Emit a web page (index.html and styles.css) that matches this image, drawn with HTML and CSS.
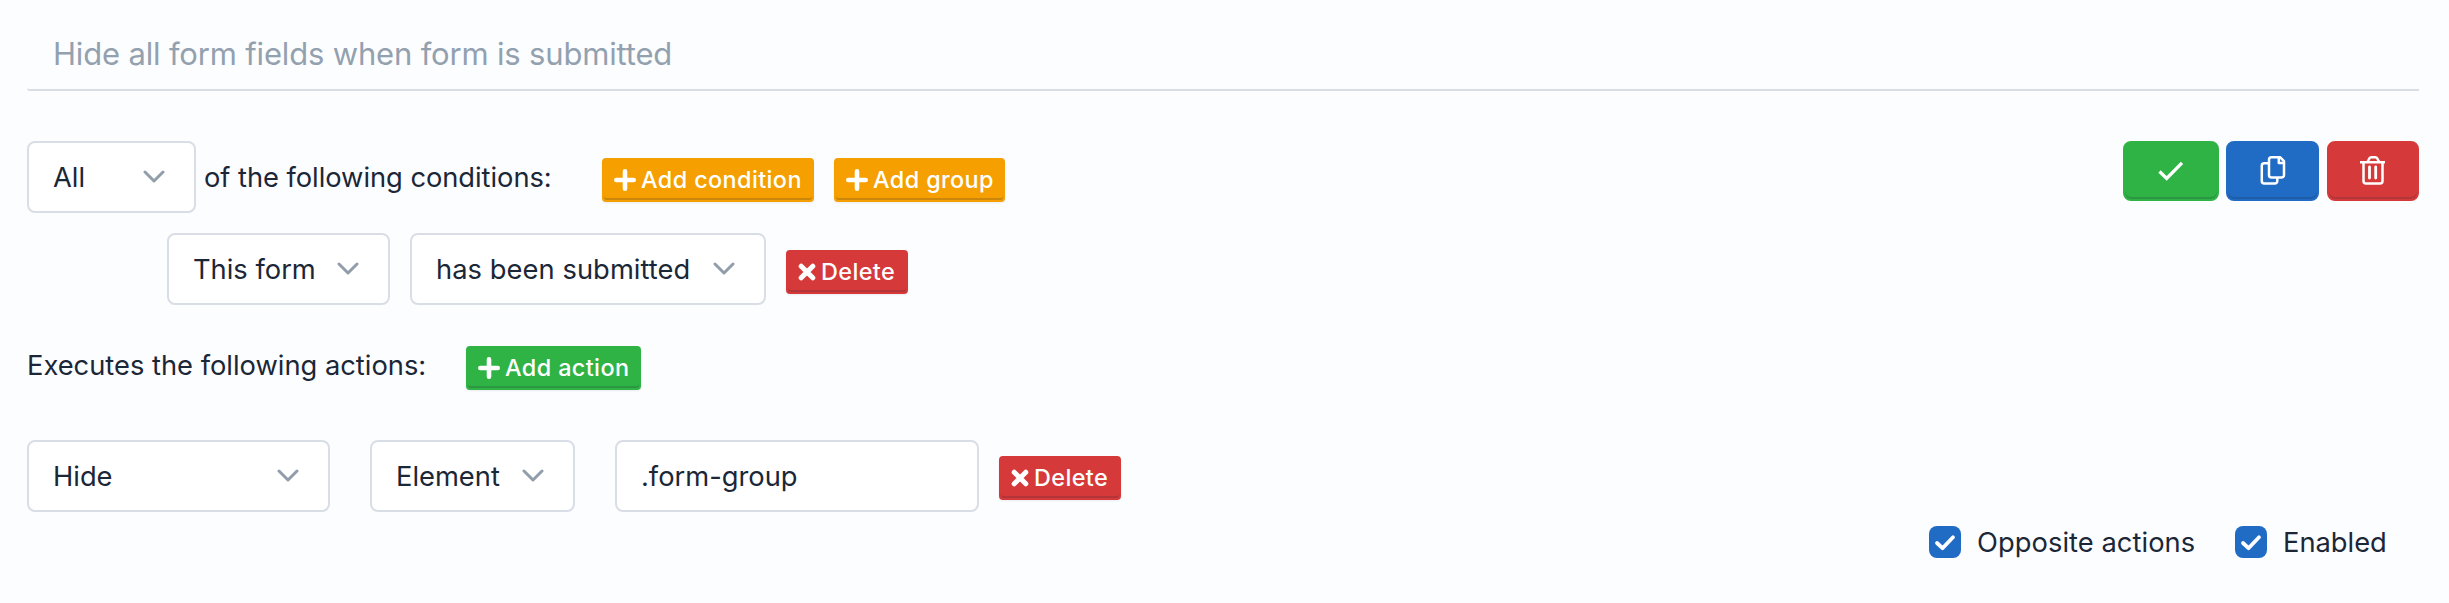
FILE: index.html
```html
<!DOCTYPE html>
<html lang="en">
<head>
<meta charset="utf-8">
<title>Form conditions</title>
<link rel="stylesheet" href="styles.css">
</head>
<body>
<svg width="0" height="0" class="sprite" aria-hidden="true">
  <symbol id="chevron" viewBox="0 0 22 14"><path d="M2 2l9 9 9-9" fill="none" stroke="#929dab" stroke-width="3" stroke-linecap="round" stroke-linejoin="round"/></symbol>
  <symbol id="plus" viewBox="0 0 22 22"><path d="M11 2.3v17.4M2.3 11h17.4" fill="none" stroke="#fff" stroke-width="4.6" stroke-linecap="round"/></symbol>
  <symbol id="cross" viewBox="0 0 18 18"><path d="M3.2 3.2l11.6 11.6M14.8 3.2L3.2 14.8" fill="none" stroke="#fff" stroke-width="5" stroke-linecap="round"/></symbol>
  <symbol id="tick" viewBox="0 0 32 32"><path d="M8 17l5.500 5.200L24 11.300" fill="none" stroke="#fff" stroke-width="3.8" stroke-linecap="round" stroke-linejoin="round"/></symbol>
</svg>
<main class="page">
  <div class="title">Hide all form fields when form is submitted</div>

  <div class="row row-match">
    <div class="select select-all"><span>All</span><svg class="chevron"><use href="#chevron"/></svg></div>
    <span class="label label-match">of the following conditions:</span>
    <button class="btn btn-orange btn-condition"><svg class="plus"><use href="#plus"/></svg>Add condition</button>
    <button class="btn btn-orange btn-group"><svg class="plus"><use href="#plus"/></svg>Add group</button>
    <div class="tools">
      <button class="tool tool-green"><svg width="40" height="40" viewBox="0 0 40 40"><path d="M8.500 20.500l7.200 6.900L31 11.800" fill="none" stroke="#fff" stroke-width="3.300"/></svg></button>
      <button class="tool tool-blue"><svg width="40" height="40" viewBox="0 0 40 40" fill="none" stroke="#fff" stroke-width="2.500" stroke-linejoin="round"><path d="M18.500 6.200h8.500l4 4V24a2.500 2.500 0 0 1-2.500 2.500h-10A2.500 2.500 0 0 1 16 24V8.700a2.500 2.500 0 0 1 2.500-2.500z"/><path d="M25.800 6.500v5.500H31M16 12.200h-4.700a2.500 2.500 0 0 0-2.500 2.500V30a2.500 2.500 0 0 0 2.500 2.500h10.500a2.500 2.500 0 0 0 2.500-2.500v-3"/></svg></button>
      <button class="tool tool-red"><svg width="40" height="40" viewBox="0 0 40 40" fill="none" stroke="#fff" stroke-width="2.500" stroke-linejoin="round"><path d="M7 11.200h25M14.500 11l1.800-3.500q.8-1.300 2-1.300h4q1.300 0 2 1.300L26.200 11M10.500 11.200V30a2.500 2.500 0 0 0 2.500 2.500h14a2.500 2.500 0 0 0 2.500-2.500V11.200"/><path d="M16.500 15.900v11.200M22.700 15.900v11.200" stroke-width="2.800" stroke-linecap="round"/></svg></button>
    </div>
  </div>

  <div class="row row-condition">
    <div class="select select-form"><span>This form</span><svg class="chevron"><use href="#chevron"/></svg></div>
    <div class="select select-state"><span class="state-text">has been submitted</span><svg class="chevron"><use href="#chevron"/></svg></div>
    <button class="btn btn-red"><svg class="cross"><use href="#cross"/></svg>Delete</button>
  </div>

  <div class="row row-execute">
    <span class="label label-execute">Executes the following actions:</span>
    <button class="btn btn-green"><svg class="plus"><use href="#plus"/></svg>Add action</button>
  </div>

  <div class="row row-action">
    <div class="select select-hide"><span>Hide</span><svg class="chevron"><use href="#chevron"/></svg></div>
    <div class="select select-element"><span>Element</span><svg class="chevron"><use href="#chevron"/></svg></div>
    <div class="select field"><span>.form-group</span></div>
    <button class="btn btn-red"><svg class="cross"><use href="#cross"/></svg>Delete</button>
  </div>

  <div class="options">
    <div class="option option-opposite"><svg class="check"><use href="#tick"/></svg><span>Opposite actions</span></div>
    <div class="option option-enabled"><svg class="check"><use href="#tick"/></svg><span>Enabled</span></div>
  </div>
</main>
</body>
</html>
```
FILE: styles.css
```css
* { box-sizing: border-box; }
body { margin: 0; background: #fcfdff; color: #1b2737; font: 27.3px/40px Inter, "Liberation Sans", sans-serif; white-space: nowrap; }
.sprite { display: block; }
.page { padding: 19px 30px 0 27px; height: 603px; }
.title { height: 72px; padding-left: 26px; border-bottom: 2px solid #d9dee6; border-radius: 3px 0 0 3px; font-size: 31px; line-height: 70px; letter-spacing: -.17px; color: #93a1af; }
.row { display: flex; align-items: flex-start; }
.row-match { margin-top: 50px; height: 72px; }
.row-condition { margin-top: 20px; padding-left: 140px; height: 72px; }
.row-execute { margin-top: 41px; height: 44px; }
.row-action { margin-top: 50px; height: 72px; }
.select { flex: none; display: flex; align-items: center; justify-content: space-between; height: 72px; padding: 0 29px 0 24px; border: 2px solid #d9dee6; border-radius: 8px; background: #fff; }
.select span, .option span { padding-top: 2px; }
.select-all { width: 169px; }
.select-form { width: 223px; margin-right: 20px; }
.select-state { width: 356px; margin-right: 20px; }
.state-text { letter-spacing: .06px; }
.select-hide { width: 303px; margin-right: 40px; }
.select-element { width: 205px; margin-right: 40px; }
.field { width: 364px; margin-right: 20px; }
.chevron { flex: none; width: 22px; height: 14px; }
.label { flex: none; }
.label-match { width: 398px; margin-left: 8px; line-height: 74px; letter-spacing: -.04px; }
.label-execute { width: 439px; line-height: 40px; }
.btn { flex: none; display: flex; align-items: center; height: 44px; margin: 0; padding: 0 0 0 10px; border: 2px solid; border-radius: 4px; color: #fff; font: 500 23.4px/40px Inter, "Liberation Sans", sans-serif; letter-spacing: .4px; box-shadow: inset 0 -2px rgba(30, 41, 59, .2), 0 1px 2px rgba(30, 41, 59, .08); }
.row-match .btn { margin-top: 17px; }
.row-condition .btn { margin-top: 17px; }
.row-action .btn { margin-top: 16px; }
.btn-orange { background: #f59f00; border-color: #f59f00; }
.btn-green { width: 175px; background: #2fb344; border-color: #2fb344; }
.btn-red { width: 122px; background: #d63939; border-color: #d63939; }
.btn-condition { width: 212px; margin-right: 20px; }
.btn-group { width: 171px; }
.plus { width: 22px; height: 22px; margin-right: 5px; }
.cross { width: 18px; height: 18px; margin-right: 5px; }
.tools { display: flex; margin-left: auto; }
.tool { display: flex; align-items: center; justify-content: center; height: 60px; margin: 0; padding: 0; border: 2px solid; border-radius: 8px; box-shadow: inset 0 -2px rgba(30, 41, 59, .2); }
.tool-green { width: 96px; background: #2fb344; border-color: #2fb344; }
.tool-blue { width: 93px; margin-left: 7px; background: #206bc4; border-color: #206bc4; }
.tool-red { width: 92px; margin-left: 8px; background: #d63939; border-color: #d63939; }
.options { display: flex; justify-content: flex-end; margin-top: 14px; height: 32px; }
.option { display: flex; align-items: center; gap: 16px; }
.option-opposite { width: 306px; letter-spacing: .06px; }
.option-enabled { width: 184px; }
.check { width: 32px; height: 32px; border-radius: 8px; background: #206bc4; }
```
